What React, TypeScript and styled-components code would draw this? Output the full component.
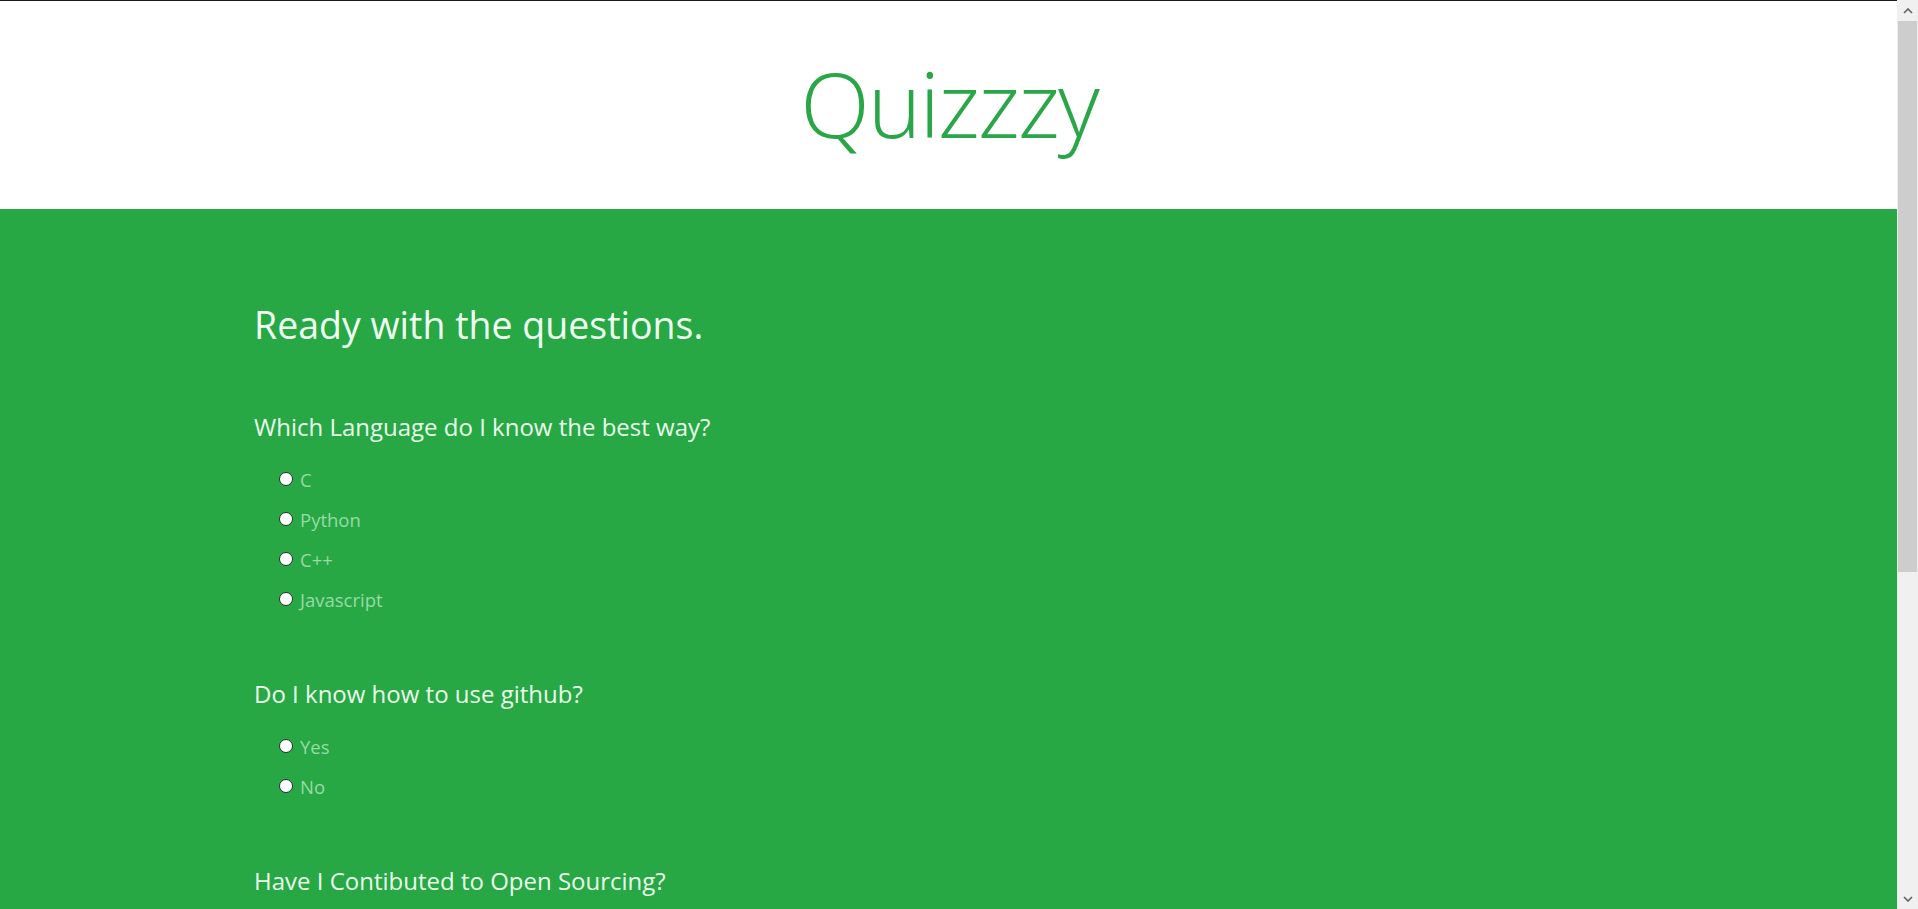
import React from "react";
import styled, { createGlobalStyle } from "styled-components";

const GlobalStyle = createGlobalStyle`
  html, body {
    margin: 0;
    padding: 0;
  }
  body {
    font-family: "Open Sans", "Noto Sans", Arial, sans-serif;
    background: #ffffff;
  }
`;

const Page = styled.div`
  display: flex;
  flex-direction: column;
  min-height: 100vh;
  margin-right: 20px;
`;

const Header = styled.header`
  height: 208px;
  border-top: 1px solid #1a1a1a;
  background: #ffffff;
  display: flex;
  justify-content: center;
  align-items: flex-start;
`;

const Title = styled.h1`
  margin: 47px 0 0;
  font-family: "Open Sans", "Noto Sans", sans-serif;
  font-weight: 300;
  font-size: 91px;
  line-height: 110px;
  color: #2aa648;
  letter-spacing: -2px;
`;

const Main = styled.main`
  flex: 1;
  background: #28a745;
  padding: 93px 254px 370px;
  display: flex;
  flex-direction: column;
`;

const Heading = styled.h2`
  margin: 0 0 64px;
  font-weight: 400;
  font-size: 37.5px;
  line-height: 46px;
  color: #effff2;
`;

const Question = styled.section`
  display: flex;
  flex-direction: column;
  margin-bottom: 67px;
`;

const QuestionText = styled.h3`
  margin: 0 0 26px;
  font-weight: 400;
  font-size: 24px;
  line-height: 30px;
  color: #e9fdec;
`;

const Options = styled.div`
  display: flex;
  flex-direction: column;
  gap: 16px;
  padding-left: 20px;
`;

const Option = styled.label`
  display: flex;
  align-items: center;
  height: 24px;
  font-size: 18.5px;
  line-height: 24px;
  color: #96dca6;
  cursor: pointer;
`;

const Radio = styled.input`
  appearance: none;
  width: 14px;
  height: 14px;
  margin: 0 7px 2px 5px;
  border: 1px solid #2b2b2b;
  border-radius: 50%;
  background: #ffffff;
  flex: none;
`;

const ScrollTrack = styled.div`
  position: fixed;
  top: 0;
  right: 0;
  bottom: 0;
  width: 20px;
  background: #f0f0f0;
  border-left: 1px solid #e8f4ea;
  display: flex;
  flex-direction: column;
`;

const ScrollButton = styled.div`
  height: 21px;
  flex: none;
  display: flex;
  align-items: center;
  justify-content: center;
  color: #606060;
`;

const ScrollThumb = styled.div`
  height: 551px;
  flex: none;
  margin: 0 1px 0 0;
  background: #cdcdcd;
`;

const ScrollRest = styled.div`
  flex: 1;
`;

const Chevron = ({ down }: { down?: boolean }) => (
  <svg width="10" height="6" viewBox="0 0 10 6">
    <path
      d={down ? "M1 1 L5 5 L9 1" : "M1 5 L5 1 L9 5"}
      fill="none"
      stroke="currentColor"
      strokeWidth="1.6"
    />
  </svg>
);

const quiz = [
  {
    name: "language",
    question: "Which Language do I know the best way?",
    options: ["C", "Python", "C++", "Javascript"],
  },
  {
    name: "github",
    question: "Do I know how to use github?",
    options: ["Yes", "No"],
  },
  {
    name: "opensource",
    question: "Have I Contibuted to Open Sourcing?",
    options: ["Yes", "No"],
  },
];

export default function App() {
  return (
    <Page>
      <GlobalStyle />
      <Header>
        <Title>Quizzzy</Title>
      </Header>
      <Main>
        <Heading>Ready with the questions.</Heading>
        {quiz.map((q) => (
          <Question key={q.name}>
            <QuestionText>{q.question}</QuestionText>
            <Options>
              {q.options.map((o) => (
                <Option key={o}>
                  <Radio type="radio" name={q.name} value={o} />
                  {o}
                </Option>
              ))}
            </Options>
          </Question>
        ))}
      </Main>
      <ScrollTrack>
        <ScrollButton>
          <Chevron />
        </ScrollButton>
        <ScrollThumb />
        <ScrollRest />
        <ScrollButton>
          <Chevron down />
        </ScrollButton>
      </ScrollTrack>
    </Page>
  );
}
